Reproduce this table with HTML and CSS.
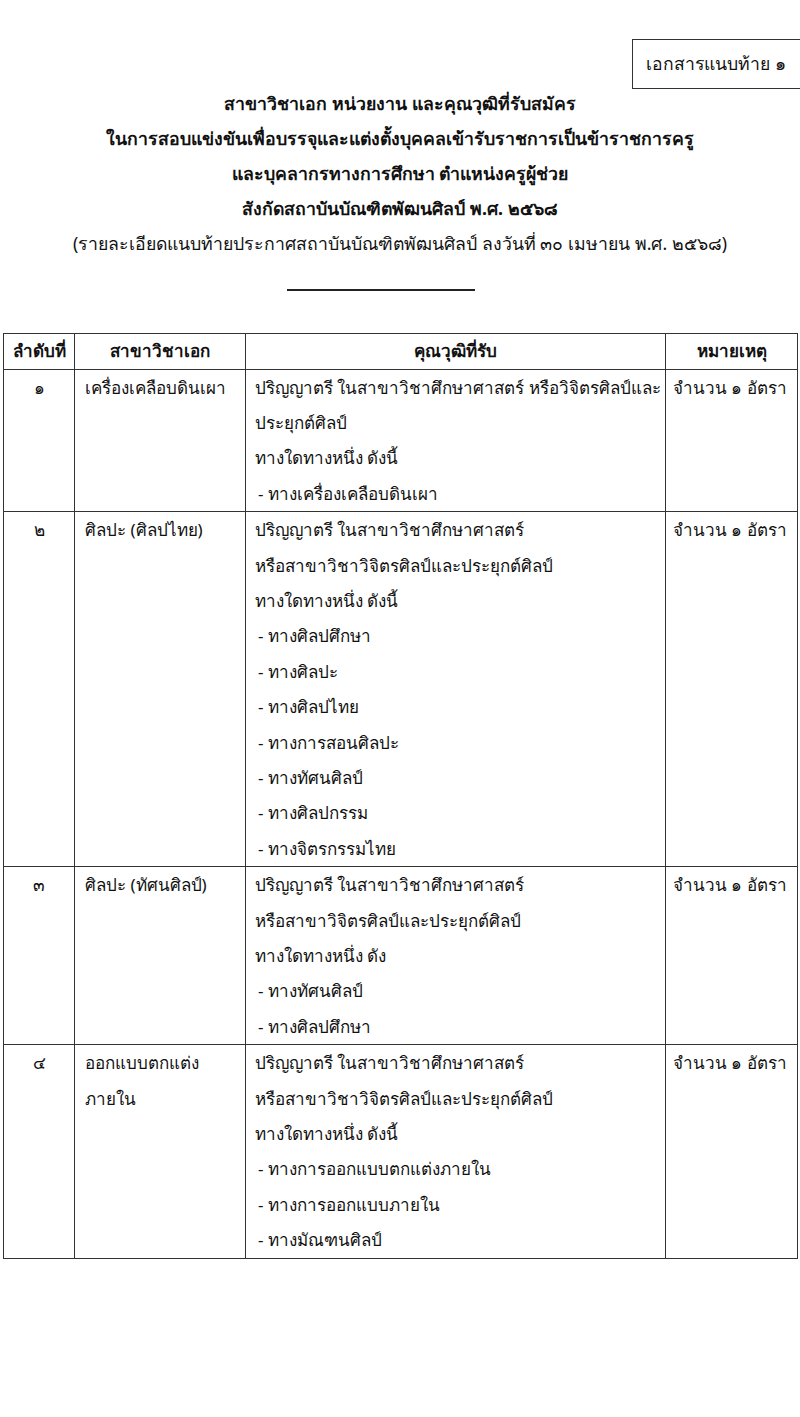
FILE: index.html
```html
<!DOCTYPE html>
<html lang="th">
<head>
<meta charset="utf-8">
<link rel="stylesheet" href="styles.css">
</head>
<body>
<div class="page">
  <div class="tag-row"><div class="tag">เอกสารแนบท้าย ๑</div></div>
  <div class="title">
    <p class="b">สาขาวิชาเอก หน่วยงาน และคุณวุฒิที่รับสมัคร</p>
    <p class="b">ในการสอบแข่งขันเพื่อบรรจุและแต่งตั้งบุคคลเข้ารับราชการเป็นข้าราชการครู</p>
    <p class="b">และบุคลากรทางการศึกษา ตำแหน่งครูผู้ช่วย</p>
    <p class="b">สังกัดสถาบันบัณฑิตพัฒนศิลป์ พ.ศ. ๒๕๖๘</p>
    <p>(รายละเอียดแนบท้ายประกาศสถาบันบัณฑิตพัฒนศิลป์ ลงวันที่ ๓๐ เมษายน พ.ศ. ๒๕๖๘)</p>
  </div>
  <div class="rule"></div>
  <table class="tbl">
    <thead>
      <tr><th class="c1">ลำดับที่</th><th class="c2">สาขาวิชาเอก</th><th class="c3">คุณวุฒิที่รับ</th><th class="c4">หมายเหตุ</th></tr>
    </thead>
    <tbody>
      <tr class="r1">
        <td class="c1">๑</td>
        <td class="c2">เครื่องเคลือบดินเผา</td>
        <td class="c3"><div>ปริญญาตรี ในสาขาวิชาศึกษาศาสตร์ หรือวิจิตรศิลป์และ</div><div>ประยุกต์ศิลป์</div><div>ทางใดทางหนึ่ง ดังนี้</div><div class="it">- ทางเครื่องเคลือบดินเผา</div></td>
        <td class="c4">จำนวน ๑ อัตรา</td>
      </tr>
      <tr class="r2">
        <td class="c1">๒</td>
        <td class="c2">ศิลปะ (ศิลปไทย)</td>
        <td class="c3"><div>ปริญญาตรี ในสาขาวิชาศึกษาศาสตร์</div><div>หรือสาขาวิชาวิจิตรศิลป์และประยุกต์ศิลป์</div><div>ทางใดทางหนึ่ง ดังนี้</div><div class="it">- ทางศิลปศึกษา</div><div class="it">- ทางศิลปะ</div><div class="it">- ทางศิลปไทย</div><div class="it">- ทางการสอนศิลปะ</div><div class="it">- ทางทัศนศิลป์</div><div class="it">- ทางศิลปกรรม</div><div class="it">- ทางจิตรกรรมไทย</div></td>
        <td class="c4">จำนวน ๑ อัตรา</td>
      </tr>
      <tr class="r3">
        <td class="c1">๓</td>
        <td class="c2">ศิลปะ (ทัศนศิลป์)</td>
        <td class="c3"><div>ปริญญาตรี ในสาขาวิชาศึกษาศาสตร์</div><div>หรือสาขาวิจิตรศิลป์และประยุกต์ศิลป์</div><div>ทางใดทางหนึ่ง ดัง</div><div class="it">- ทางทัศนศิลป์</div><div class="it">- ทางศิลปศึกษา</div></td>
        <td class="c4">จำนวน ๑ อัตรา</td>
      </tr>
      <tr class="r4">
        <td class="c1">๔</td>
        <td class="c2"><div>ออกแบบตกแต่ง</div><div>ภายใน</div></td>
        <td class="c3"><div>ปริญญาตรี ในสาขาวิชาศึกษาศาสตร์</div><div>หรือสาขาวิชาวิจิตรศิลป์และประยุกต์ศิลป์</div><div>ทางใดทางหนึ่ง ดังนี้</div><div class="it">- ทางการออกแบบตกแต่งภายใน</div><div class="it">- ทางการออกแบบภายใน</div><div class="it">- ทางมัณฑนศิลป์</div></td>
        <td class="c4">จำนวน ๑ อัตรา</td>
      </tr>
    </tbody>
  </table>
</div>
</body>
</html>
```
FILE: styles.css
```css
* { box-sizing: border-box; }
html, body { margin: 0; padding: 0; background: #fff; }
body {
  font-family: "Noto Sans", "DejaVu Sans", sans-serif;
  color: #111;
  font-size: 17px;
}
.page { width: 800px; padding: 39px 0 0 3px; }
.tag-row { display: flex; justify-content: flex-end; }
.tag {
  width: 168px; height: 50px;
  border: 1.5px solid #333; border-right: none;
  display: flex; align-items: center; padding-left: 13px;
  font-size: 17.6px;
}
.title { text-align: center; margin-top: -3px; margin-left: -3px; font-size: 17.7px; }
.title p { margin: 0; line-height: 35px; }
.title .b { font-weight: bold; }
.rule { width: 188px; height: 1.5px; background: #222; margin: 28px 0 0 284px; }
.tbl {
  margin-top: 42px;
  border-collapse: collapse;
  width: 794px;
  table-layout: fixed;
}
.tbl th, .tbl td {
  border: 1.5px solid #333;
  vertical-align: top;
  padding: 0;
  line-height: 35.4px;
  font-weight: normal;
}
.tbl th { font-weight: bold; height: 36px; line-height: 34px; text-align: center; }
.tbl th.c1 { width: 71px; }
.tbl th.c2 { width: 171px; }
.tbl th.c3 { width: 420px; }
.tbl th.c4 { width: 132px; }
td.c1 { text-align: center; }
td.c2 { padding-left: 10px; }
td.c3 { padding-left: 9px; }
td.c3 .it { padding-left: 3px; }
td.c4 { padding-left: 7px; }
```
